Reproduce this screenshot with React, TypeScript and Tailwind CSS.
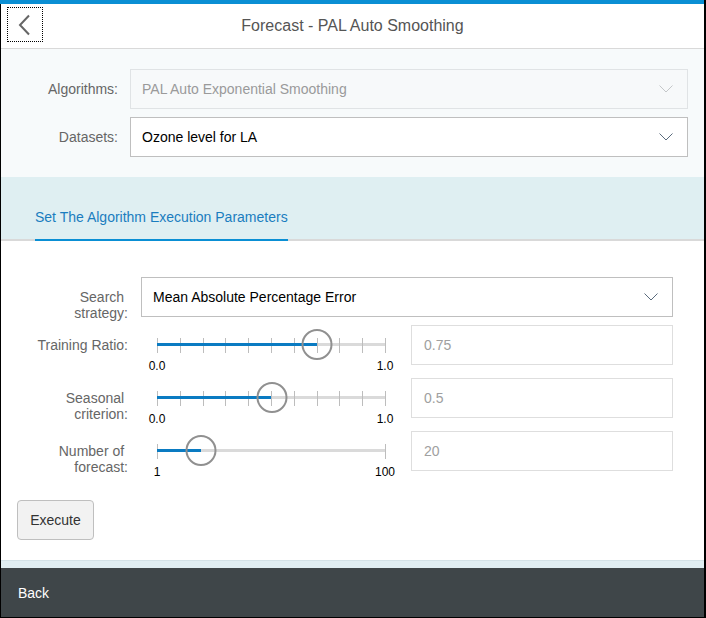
import type { ReactNode } from 'react';

const TRACK = 228;

function Chevron({ color }: { color: string }) {
    return (
        <svg width="14" height="8" viewBox="0 0 14 8" fill="none">
            <polyline points="0.5,0.5 7,7 13.5,0.5" stroke={color} strokeWidth="1" />
        </svg>
    );
}

function Select({ value, disabled, className }: { value: string; disabled?: boolean; className?: string }) {
    return (
        <div
            className={`flex h-10 items-center justify-between border pl-[11px] pr-[14px] ${
                disabled ? 'border-[#e0e3e5] bg-[#f7f9fa] text-[#9a9a9a]' : 'border-[#bfbfbf] bg-white text-black'
            } ${className ?? ''}`}
        >
            <span>{value}</span>
            <Chevron color={disabled ? '#c4c7c9' : '#5a6b7d'} />
        </div>
    );
}

interface SliderProps {
    pct: number;
    ticks: number;
    min: string;
    max: string;
}

function Slider({ pct, ticks, min, max }: SliderProps) {
    const x = 16 + (pct * TRACK) / 100;
    const stops = Array.from({ length: ticks + 1 }, (_, i) => 16 + (i * TRACK) / ticks);
    return (
        <div className="relative h-10 w-[260px] shrink-0">
            <div className="absolute left-4 top-[18px] h-[3px] w-[228px] bg-[#dadada]" />
            {stops.map((s) => (
                <div key={s} className="absolute top-[13px] h-[15px] w-px bg-[#bdbdbd]" style={{ left: s }} />
            ))}
            <div className="absolute left-4 top-[18px] h-[3px] bg-[#0a7bc2]" style={{ width: x - 16 }} />
            <div
                className="absolute top-[4px] h-[31px] w-[31px] -translate-x-1/2 rounded-full border-2 border-[#909090]"
                style={{ left: x + 0.5 }}
            />
            <span className="absolute left-4 top-[34px] -translate-x-1/2 text-xs leading-[14px] text-black">{min}</span>
            <span className="absolute left-[244px] top-[34px] -translate-x-1/2 text-xs leading-[14px] text-black">{max}</span>
        </div>
    );
}

function Row({ label, children }: { label: ReactNode; children: ReactNode }) {
    return (
        <div className="flex h-10 items-start gap-[13px]">
            <div className="w-[111px] shrink-0 pt-3 text-right leading-4 text-[#666]">{label}</div>
            {children}
        </div>
    );
}

function Param({ label, value, slider }: { label: ReactNode; value: string; slider: SliderProps }) {
    return (
        <Row label={label}>
            <div className="flex gap-[10px]">
                <Slider {...slider} />
                <div className="flex h-10 w-[262px] items-center border border-[#dedede] bg-white px-3 text-[#a0a0a0]">
                    {value}
                </div>
            </div>
        </Row>
    );
}

export default function App() {
    return (
        <div className="h-[618px] w-[706px] border-r-2 border-black font-['Liberation_Sans',Arial,sans-serif] text-sm">
            <div className="h-1 bg-[#0a8fd4]" />
            <div className="flex h-[614px] flex-col border-b border-l border-black">
                {/* header */}
                <div className="relative flex h-[45px] shrink-0 items-center justify-center border-b border-[#d9d9d9] bg-white">
                    <button className="absolute left-[6px] top-[3px] flex h-[35px] w-[36px] items-center justify-center border border-dotted border-black">
                        <svg width="14" height="22" viewBox="0 0 14 22" fill="none">
                            <polyline points="11,1.5 2,11 11,20.5" stroke="#666" strokeWidth="2" />
                        </svg>
                    </button>
                    <h1 className="text-base text-[#555]">Forecast - PAL Auto Smoothing</h1>
                </div>

                {/* datasource */}
                <div className="flex flex-col gap-2 bg-[#f7fafb] py-5 pl-4 pr-4">
                    <div className="flex items-center gap-3">
                        <div className="w-[101px] shrink-0 text-right text-[#666]">Algorithms:</div>
                        <Select className="flex-1" value="PAL Auto Exponential Smoothing" disabled />
                    </div>
                    <div className="flex items-center gap-3">
                        <div className="w-[101px] shrink-0 text-right text-[#666]">Datasets:</div>
                        <Select className="flex-1" value="Ozone level for LA" />
                    </div>
                </div>

                {/* tab bar */}
                <div className="flex h-16 shrink-0 items-end border-b-2 border-[#d9d9d9] bg-[#dfeff2] pl-[34px]">
                    <div className="-mb-[2px] border-b-2 border-[#0a8fd4] pb-[12px] text-[#1a7dbf]">
                        Set The Algorithm Execution Parameters
                    </div>
                </div>

                {/* params */}
                <div className="flex flex-1 flex-col bg-white pb-5 pl-4 pr-[31px] pt-9">
                    <Row
                        label={
                            <>
                                Search&nbsp;
                                <br />
                                strategy:
                            </>
                        }
                    >
                        <Select className="flex-1" value="Mean Absolute Percentage Error" />
                    </Row>
                    <div className="mt-2 flex flex-col gap-[13px]">
                        <Param label="Training Ratio:" value="0.75" slider={{ pct: 70, ticks: 10, min: '0.0', max: '1.0' }} />
                        <Param
                            label={
                                <>
                                    Seasonal&nbsp;
                                    <br />
                                    criterion:
                                </>
                            }
                            value="0.5"
                            slider={{ pct: 50, ticks: 10, min: '0.0', max: '1.0' }}
                        />
                        <Param
                            label={
                                <>
                                    Number of&nbsp;
                                    <br />
                                    forecast:
                                </>
                            }
                            value="20"
                            slider={{ pct: 19.2, ticks: 1, min: '1', max: '100' }}
                        />
                    </div>
                    <div className="mt-auto">
                        <button className="h-10 w-[77px] rounded-sm border border-[#bfbfbf] bg-[#f2f2f2] text-[#333]">
                            Execute
                        </button>
                    </div>
                </div>

                {/* footer */}
                <div className="h-2 shrink-0 border-t border-[#d3e2e7] bg-[#e0eef2]" />
                <div className="flex h-[49px] shrink-0 items-center bg-[#3f4649] pl-[17px] text-white">Back</div>
            </div>
        </div>
    );
}
